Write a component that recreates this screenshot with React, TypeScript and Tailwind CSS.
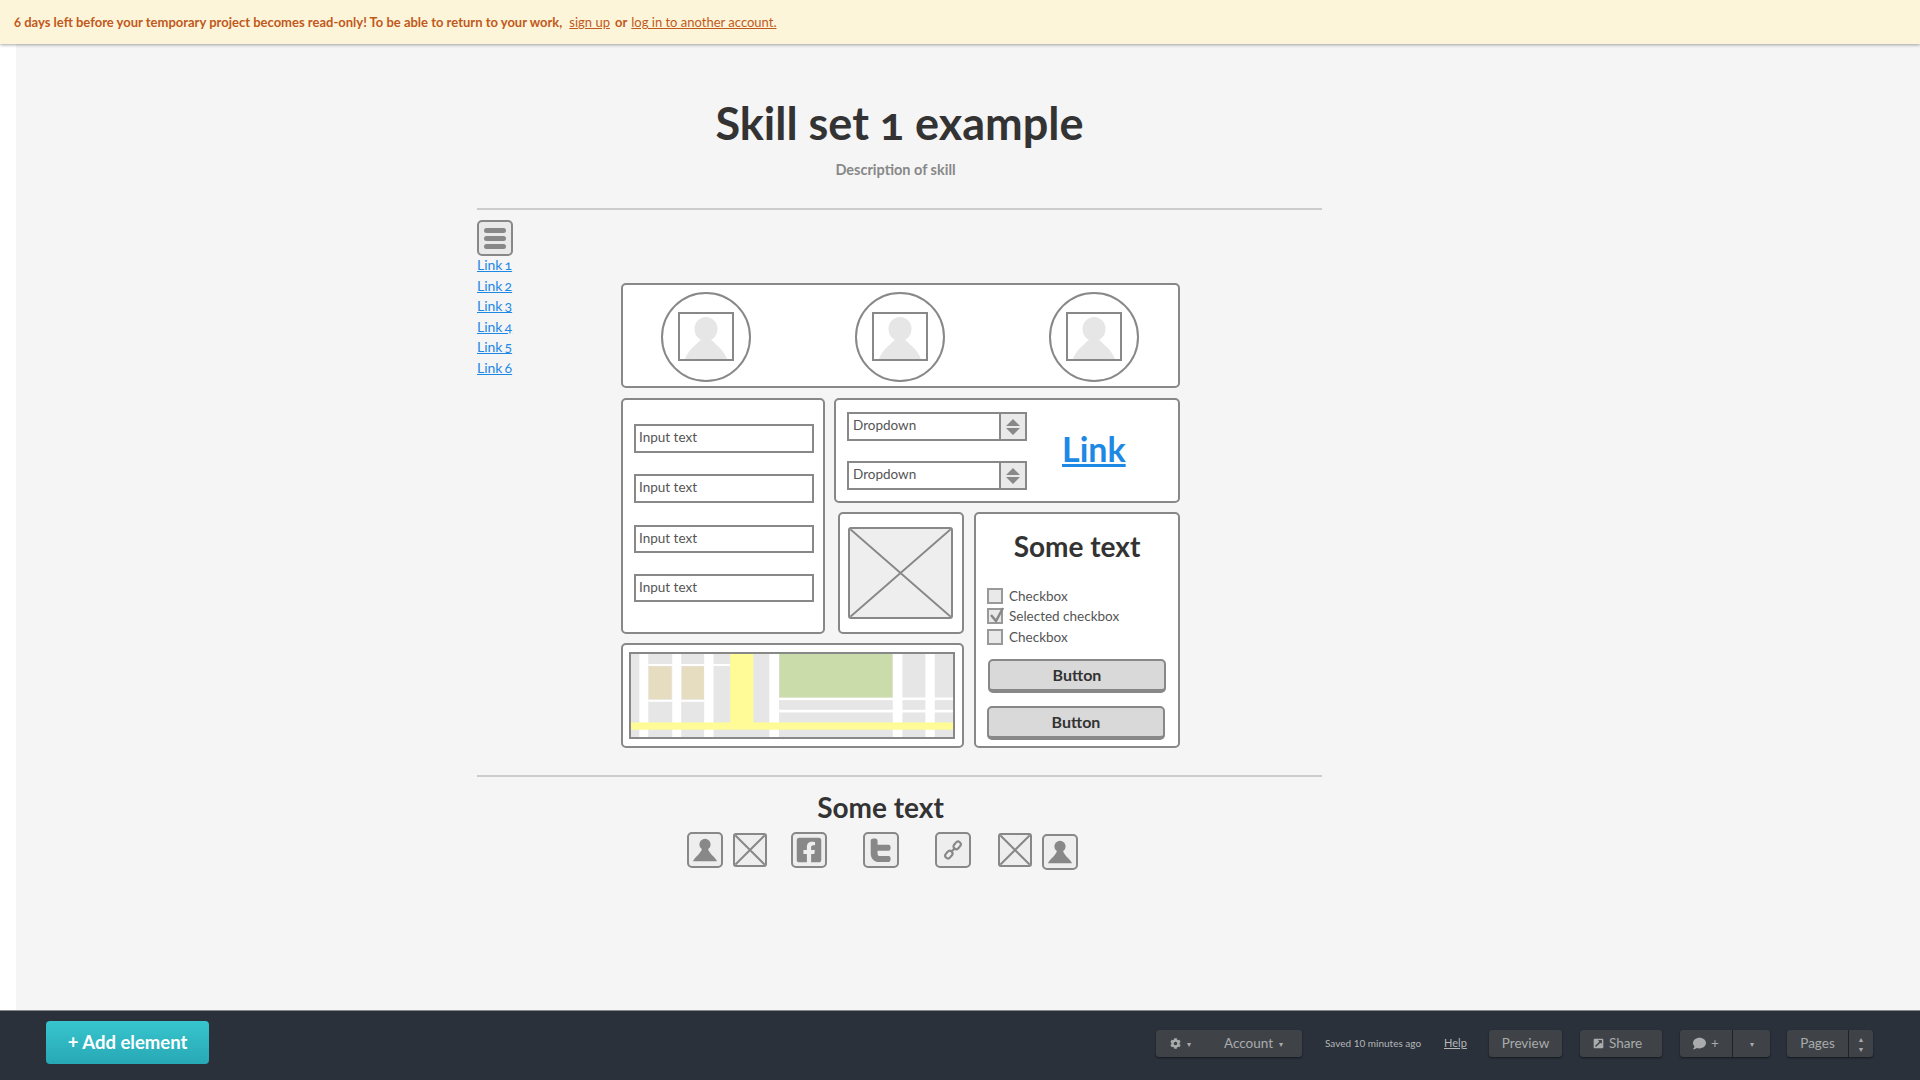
import { FaCog, FaComment, FaFacebookSquare, FaExternalLinkSquareAlt } from 'react-icons/fa'

const font = 'font-["Lato","Open_Sans",sans-serif]'

function Avatar() {
  return (
    <div className="w-[90px] h-[90px] rounded-full border-2 border-[#888] flex items-center justify-center">
      <div className="w-[56px] h-[49px] border-2 border-[#888] overflow-hidden">
        <svg viewBox="0 0 52 45" className="w-full h-full block">
          <ellipse cx="26" cy="15" rx="11.5" ry="12" fill="#e6e6e6" />
          <path d="M5 45 C9 34 18 30 22 24 H30 C34 30 43 34 47 45 Z" fill="#e6e6e6" />
        </svg>
      </div>
    </div>
  )
}

function InputBox({ className }: { className: string }) {
  return (
    <div className={`w-[180px] border-2 border-[#888] bg-white pl-[3px] pt-[2px] text-[13.5px] leading-[18px] text-[#555] ${className}`}>
      Input text
    </div>
  )
}

function Dropdown({ className }: { className: string }) {
  return (
    <div className={`w-[180px] border-2 border-[#888] bg-white flex text-[13.5px] leading-[18px] text-[#555] ${className}`}>
      <div className="flex-1 pl-[4px] pt-[2px]">Dropdown</div>
      <div className="w-[26px] border-l-2 border-[#888] bg-[#e9e9e9] flex items-center justify-center">
        <svg viewBox="0 0 14 18" className="w-[14px] h-[18px]">
          <path d="M7 1 L14 8 H0 Z M0 10 H14 L7 17 Z" fill="#888" />
        </svg>
      </div>
    </div>
  )
}

function CrossBox({ className }: { className: string }) {
  return (
    <div className={`border-2 border-[#888] bg-[#eee] rounded-[3px] overflow-hidden ${className}`}>
      <svg viewBox="0 0 100 100" preserveAspectRatio="none" className="w-full h-full block">
        <path d="M0 0 L100 100 M100 0 L0 100" stroke="#888" strokeWidth="2" vectorEffect="non-scaling-stroke" />
      </svg>
    </div>
  )
}

function IconBox({ children, className = '' }: { children: React.ReactNode; className?: string }) {
  return (
    <div className={`w-[36px] h-[36px] border-2 border-[#888] bg-[#eee] rounded-[5px] flex items-center justify-center ${className}`}>
      {children}
    </div>
  )
}

function UserGlyph() {
  return (
    <svg viewBox="0 0 28 28" className="w-[26px] h-[28px]">
      <circle cx="14" cy="8" r="6" fill="#888" />
      <path d="M1 26 C3 21 9 19 11 12 H17 C19 19 25 21 27 26 Z" fill="#888" />
    </svg>
  )
}

function Check({ checked }: { checked?: boolean }) {
  return (
    <div className="relative w-[16px] h-[16px] border-2 border-[#999] bg-[#e9e9e9]">
      {checked && (
        <svg viewBox="0 0 18 18" className="absolute left-[-1px] top-[-4px] w-[18px] h-[18px]">
          <path d="M3 9 L8 15 L15 2" fill="none" stroke="#888" strokeWidth="2.5" />
        </svg>
      )}
    </div>
  )
}

function WireButton({ className }: { className: string }) {
  return (
    <div className={`w-[178px] h-[34px] rounded-[5px] border-2 border-b-[4px] border-[#888] bg-[#d9d9d9] flex items-center justify-center text-[16px] font-bold text-[#333] ${className}`}>
      Button
    </div>
  )
}

function MapDrawing() {
  return (
    <div className="w-[326px] h-[87px] mt-[7px] ml-[6px] border-2 border-[#888]">
      <svg viewBox="62 462 968 250" preserveAspectRatio="none" className="w-full h-full block">
        <rect x="62" y="462" width="968" height="250" fill="#e6e6e6" />
        <g fill="#fff">
          <rect x="87" y="462" width="27" height="250" />
          <rect x="186" y="462" width="27" height="250" />
          <rect x="282" y="462" width="28" height="250" />
          <rect x="478" y="462" width="29" height="250" />
          <rect x="849" y="462" width="29" height="250" />
          <rect x="947" y="462" width="28" height="250" />
          <rect x="114" y="492" width="246" height="6" />
          <rect x="114" y="600" width="168" height="6" />
          <rect x="507" y="593" width="523" height="8" />
          <rect x="507" y="630" width="523" height="8" />
        </g>
        <rect x="115" y="499" width="68" height="99" fill="#e6dcc0" />
        <rect x="215" y="499" width="66" height="99" fill="#e6dcc0" />
        <rect x="508" y="462" width="340" height="131" fill="#cadcaa" />
        <rect x="360" y="462" width="70" height="210" fill="#fffb96" />
        <rect x="62" y="668" width="968" height="22" fill="#fffb96" />
      </svg>
    </div>
  )
}

function DarkButton({ children, className }: { children: React.ReactNode; className: string }) {
  return (
    <div className={`h-[27px] rounded-[3px] bg-[#3f4347] shadow-[0_1px_2px_rgba(0,0,0,0.5)] flex items-center text-[13.5px] text-[#a9abad] ${className}`}>
      {children}
    </div>
  )
}

const links = ['Link 1', 'Link 2', 'Link 3', 'Link 4', 'Link 5', 'Link 6']

export default function App() {
  return (
    <div className={`h-screen flex flex-col overflow-hidden ${font}`}>
      {/* Banner */}
      <div className="relative z-10 h-[44px] shrink-0 bg-[#fdf5d9] shadow-[0_1px_3px_rgba(0,0,0,0.35)] pl-[14px] pt-[2px] flex items-center text-[13px] font-bold text-[#c1591c] [font-variant-numeric:oldstyle-nums]">
        <span>6 days left before your temporary project becomes read-only! To be able to return to your work,</span>
        <span className="ml-[7px] font-normal underline">sign up</span>
        <span className="ml-[5px]">or</span>
        <span className="ml-[4px] font-normal underline">log in to another account.</span>
      </div>

      <div className="flex-1 flex min-h-0">
        <div className="w-[16px] bg-white" />
        <div className="flex-1 bg-[#f5f5f5] pl-[461px] [font-variant-numeric:oldstyle-nums]">
          <div className="w-[845px]">
            <h1 className="pt-[53px] h-[106px] text-center text-[45px] leading-[52px] font-bold text-[#333]">Skill set 1 example</h1>
            <p className="mt-[10px] pr-[8px] text-center text-[14.5px] leading-[20px] font-bold text-[#888]">Description of skill</p>
            <div className="mt-[28px] h-[2px] bg-[#ccc]" />

            <div className="flex">
              {/* Sidebar nav */}
              <div className="w-[144px] pt-[10px]">
                <div className="w-[36px] h-[36px] border-2 border-[#888] bg-[#e9e9e9] rounded-[5px] flex flex-col items-center justify-center gap-[3px]">
                  <div className="w-[22px] h-[5px] rounded-full bg-[#888]" />
                  <div className="w-[22px] h-[5px] rounded-full bg-[#888]" />
                  <div className="w-[22px] h-[5px] rounded-full bg-[#888]" />
                </div>
                <div className="-mt-[1px] text-[14px] leading-[20.6px] text-[#1e88e5] underline [word-spacing:-1.5px]">
                  {links.map((l) => (
                    <div key={l}>{l}</div>
                  ))}
                </div>
              </div>

              {/* Wireframe cards */}
              <div className="pt-[73px]">
                <div className="w-[559px] h-[105px] bg-white border-2 border-[#888] rounded-[5px] pt-[2px] pr-[2px] flex items-center justify-center gap-[104px]">
                  <Avatar />
                  <Avatar />
                  <Avatar />
                </div>

                <div className="mt-[10px] grid grid-cols-[213px_4px_126px_10px_206px] grid-rows-[105px_9px_122px_9px_105px]">
                  <div className="col-start-1 row-start-1 row-end-4 w-[204px] bg-white border-2 border-[#888] rounded-[5px] pl-[11px] pt-[24px]">
                    <InputBox className="h-[29px]" />
                    <InputBox className="h-[29px] mt-[21px]" />
                    <InputBox className="h-[28px] mt-[22px]" />
                    <InputBox className="h-[28px] mt-[21px]" />
                  </div>

                  <div className="col-start-2 col-end-6 row-start-1 bg-white border-2 border-[#888] rounded-[5px] pl-[11px] pt-[12px] flex">
                    <div>
                      <Dropdown className="h-[29px]" />
                      <Dropdown className="h-[29px] mt-[20px]" />
                    </div>
                    <div className="ml-[35px] pt-[12px] text-[34px] leading-[50px] font-bold text-[#1e88e5] underline">Link</div>
                  </div>

                  <div className="col-start-3 row-start-3 bg-white border-2 border-[#888] rounded-[5px] pl-[8px] pt-[13px]">
                    <CrossBox className="w-[105px] h-[92px]" />
                  </div>

                  <div className="col-start-5 row-start-3 row-end-6 bg-white border-2 border-[#888] rounded-[5px]">
                    <div className="pt-[14px] text-center text-[28px] leading-[36px] font-bold text-[#333]">Some text</div>
                    <div className="mt-[22px] pl-[11px] text-[13.5px] leading-[18px] text-[#555]">
                      <div className="flex items-center h-[20px]">
                        <Check />
                        <span className="ml-[6px]">Checkbox</span>
                      </div>
                      <div className="flex items-center h-[20px]">
                        <Check checked />
                        <span className="ml-[6px]">Selected checkbox</span>
                      </div>
                      <div className="flex items-center h-[21px]">
                        <Check />
                        <span className="ml-[6px]">Checkbox</span>
                      </div>
                    </div>
                    <WireButton className="mt-[12px] ml-[12px]" />
                    <WireButton className="mt-[13px] ml-[11px]" />
                  </div>

                  <div className="col-start-1 col-end-4 row-start-5 w-[343px] bg-white border-2 border-[#888] rounded-[5px]">
                    <MapDrawing />
                  </div>
                </div>
              </div>
            </div>

            <div className="mt-[27px] h-[2px] bg-[#ccc]" />
            <div className="mt-[12px] pr-[38px] text-center text-[28px] leading-[36px] font-bold text-[#333]">Some text</div>

            {/* Social icon row */}
            <div className="mt-[7px] pl-[210px] flex items-start">
              <IconBox><UserGlyph /></IconBox>
              <CrossBox className="w-[34px] h-[34px] ml-[10px] mt-[1px]" />
              <IconBox className="ml-[24px]">
                <FaFacebookSquare className="w-[28px] h-[28px] text-[#888]" />
              </IconBox>
              <IconBox className="ml-[36px]">
                <svg viewBox="0 0 28 28" className="w-[24px] h-[26px]">
                  <path d="M2 2 C4 0 10 0 10 3 V8 H23 C26 8 26 15 23 15 H10 V18 C10 20 11 21 13 21 H23 C26 21 26 28 23 28 H12 C6 28 2 24 2 18 Z" fill="#888" />
                </svg>
              </IconBox>
              <IconBox className="ml-[36px]">
                <svg viewBox="0 0 24 24" className="w-[22px] h-[22px]" fill="none" stroke="#888" strokeWidth="2.4">
                  <rect x="3" y="14" width="9" height="6" rx="3" transform="rotate(-50 7.5 17)" />
                  <rect x="12" y="4" width="9" height="6" rx="3" transform="rotate(-50 16.5 7)" />
                  <path d="M9.5 14.5 L14.5 9.5" />
                </svg>
              </IconBox>
              <CrossBox className="w-[34px] h-[34px] ml-[27px] mt-[1px]" />
              <IconBox className="ml-[10px] mt-[2px]"><UserGlyph /></IconBox>
            </div>
          </div>
        </div>
      </div>

      {/* Bottom bar */}
      <div className="h-[70px] shrink-0 bg-[#2a313a] border-t border-[#888] flex items-start pt-[10px] pl-[46px] pr-[47px]">
        <div className="w-[163px] h-[43px] rounded-[4px] bg-gradient-to-b from-[#38c5cd] to-[#27a9b5] flex items-center justify-center text-[18.5px] font-bold text-white">
          + Add element
        </div>
        <div className="ml-auto mt-[9px] flex items-center">
          <DarkButton className="w-[146px] pl-[14px]">
            <FaCog className="w-[11px] h-[11px]" />
            <span className="ml-[6px] text-[8px]">▾</span>
            <span className="ml-[33px]">Account</span>
            <span className="ml-[6px] text-[8px]">▾</span>
          </DarkButton>
          <span className="ml-[23px] w-[96px] whitespace-nowrap text-[10px] text-[#b5b7b9]">Saved 10 minutes ago</span>
          <span className="ml-[23px] w-[22px] text-[11px] text-[#b5b7b9] underline">Help</span>
          <DarkButton className="ml-[23px] w-[73px] justify-center">Preview</DarkButton>
          <DarkButton className="ml-[18px] w-[82px] pl-[13px]">
            <FaExternalLinkSquareAlt className="w-[11px] h-[11px] mr-[5px]" />
            Share
          </DarkButton>
          <DarkButton className="ml-[18px] w-[90px]">
            <div className="w-[53px] flex items-center justify-center border-r border-[#222] h-full">
              <FaComment className="w-[13px] h-[13px]" />
              <span className="ml-[5px]">+</span>
            </div>
            <span className="flex-1 text-center text-[8px]">▾</span>
          </DarkButton>
          <DarkButton className="ml-[17px] w-[86px]">
            <div className="w-[62px] h-full flex items-center justify-center border-r border-[#222]">Pages</div>
            <div className="flex-1 flex flex-col items-center text-[7px] leading-[10px]">
              <span>▲</span>
              <span>▼</span>
            </div>
          </DarkButton>
        </div>
      </div>
    </div>
  )
}
